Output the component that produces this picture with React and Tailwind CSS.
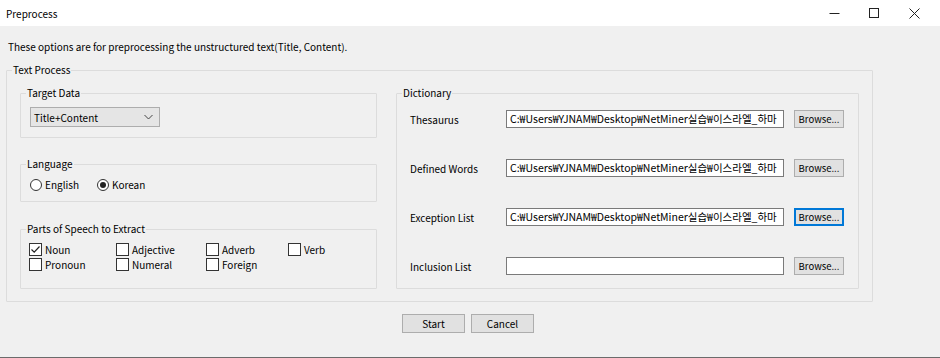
import React from "react";

const FONT = { fontFamily: '"Noto Sans CJK KR", "Noto Sans", sans-serif' };

function Checkbox({ label, checked, w }) {
  return (
    <div className={`flex items-center gap-[3px] h-[15px] ${w}`}>
      <span className="w-[13px] h-[13px] border border-[#333] bg-white flex items-center justify-center">
        {checked && (
          <svg width="11" height="11" viewBox="0 0 11 11">
            <path d="M1.5 5.5 L4.2 8.2 L9.5 2.5" fill="none" stroke="#222" strokeWidth="1.2" />
          </svg>
        )}
      </span>
      <span>{label}</span>
    </div>
  );
}

function Radio({ label, checked, w }) {
  return (
    <div className={`flex items-center gap-[3px] ${w}`}>
      <span className="w-[12px] h-[12px] rounded-full border border-[#333] bg-white flex items-center justify-center">
        {checked && <span className="w-[6px] h-[6px] rounded-full bg-[#222]" />}
      </span>
      <span>{label}</span>
    </div>
  );
}

function Group({ title, className, inner, children }) {
  return (
    <fieldset className={`border border-[#dcdcdc] rounded-[1px] ${className}`}>
      <legend className="px-[1px] ml-[5px] leading-[16px]">{title}</legend>
      <div className={inner}>{children}</div>
    </fieldset>
  );
}

function DictRow({ label, value, focused }) {
  return (
    <div className="flex items-center h-[18px]">
      <span className="w-[96px]">{label}</span>
      <div className="w-[278px] h-[18px] border border-[#7a7a7a] bg-white flex items-center px-[3px] overflow-hidden whitespace-nowrap text-[10.5px]">
        {value}
      </div>
      <button
        className={`ml-[10px] w-[50px] h-[18px] bg-[#e1e1e1] flex items-center justify-center text-[9.5px] ${
          focused ? "border-2 border-[#0078d7]" : "border border-[#adadad]"
        }`}
      >
        Browse...
      </button>
    </div>
  );
}

export default function App() {
  const path = "C:\u20A9Users\u20A9YJNAM\u20A9Desktop\u20A9NetMiner실습\u20A9이스라엘_하마";
  return (
    <div
      className="w-[940px] h-[358px] bg-[#f0f0f0] text-[10px] text-black flex flex-col overflow-hidden border-b border-[#6b6b6b]"
      style={FONT}
    >
      {/* title bar */}
      <div className="h-[26px] bg-white flex items-center shrink-0">
        <span className="pl-[6px] flex-1">Preprocess</span>
        <div className="flex items-center h-full">
          <div className="w-[40px] flex justify-center">
            <svg width="11" height="11" viewBox="0 0 11 11">
              <path d="M0.5 5.5 H10.5" stroke="#222" strokeWidth="1" />
            </svg>
          </div>
          <div className="w-[40px] flex justify-center">
            <svg width="10" height="10" viewBox="0 0 10 10">
              <rect x="0.5" y="0.5" width="9" height="9" fill="none" stroke="#222" strokeWidth="1" />
            </svg>
          </div>
          <div className="w-[46px] flex justify-center pr-[6px]">
            <svg width="11" height="11" viewBox="0 0 11 11">
              <path d="M0.5 0.5 L10.5 10.5 M10.5 0.5 L0.5 10.5" stroke="#222" strokeWidth="1" />
            </svg>
          </div>
        </div>
      </div>

      {/* body */}
      <div className="flex flex-col pl-[6px] pt-[13px]">
        <div className="pl-[2px] leading-[16px]">
          These options are for preprocessing the unstructured text(Title, Content).
        </div>
        <Group title="Text Process" className="w-[866px] mt-[7px] h-[240px]" inner="pl-[13px] pr-[13px] pt-[7px]">
          <div className="flex gap-[19px]">
            <div className="w-[357px] flex flex-col">
              <Group title="Target Data" className="h-[53px]" inner="pl-[9px] pt-[6px]">
                <div className="w-[130px] h-[20px] bg-[#e5e5e5] border border-[#adadad] flex items-center pl-[3px] justify-between pr-[6px]">
                  <span>Title+Content</span>
                  <svg width="9" height="6" viewBox="0 0 9 6">
                    <path d="M0.5 1 L4.5 5 L8.5 1" fill="none" stroke="#444" strokeWidth="1" />
                  </svg>
                </div>
              </Group>
              <Group title="Language" className="h-[46px] mt-[18px]" inner="pl-[9px] pt-[5px]">
                <div className="flex">
                  <Radio label="English" w="w-[67px]" />
                  <Radio label="Korean" checked />
                </div>
              </Group>
              <Group title="Parts of Speech to Extract" className="h-[68px] mt-[19px]" inner="pl-[8px] pt-[5px]">
                <div className="flex flex-col">
                  <div className="flex">
                    <Checkbox label="Noun" checked w="w-[87px]" />
                    <Checkbox label="Adjective" w="w-[90px]" />
                    <Checkbox label="Adverb" w="w-[82px]" />
                    <Checkbox label="Verb" />
                  </div>
                  <div className="flex">
                    <Checkbox label="Pronoun" w="w-[87px]" />
                    <Checkbox label="Numeral" w="w-[90px]" />
                    <Checkbox label="Foreign" w="w-[82px]" />
                  </div>
                </div>
              </Group>
            </div>
            <Group title="Dictionary" className="w-[463px] h-[204px]" inner="pl-[13px] pt-[9px]">
              <div className="flex flex-col gap-[31px]">
                <DictRow label="Thesaurus" value={path} />
                <DictRow label="Defined Words" value={path} />
                <DictRow label="Exception List" value={path} focused />
                <DictRow label="Inclusion List" value="" />
              </div>
            </Group>
          </div>
        </Group>
        <div className="flex justify-center gap-[6px] mt-[12px] pr-[10px]">
          <button className="w-[63px] h-[19px] bg-[#e1e1e1] border border-[#adadad]">Start</button>
          <button className="w-[63px] h-[19px] bg-[#e1e1e1] border border-[#adadad]">Cancel</button>
        </div>
      </div>
    </div>
  );
}
